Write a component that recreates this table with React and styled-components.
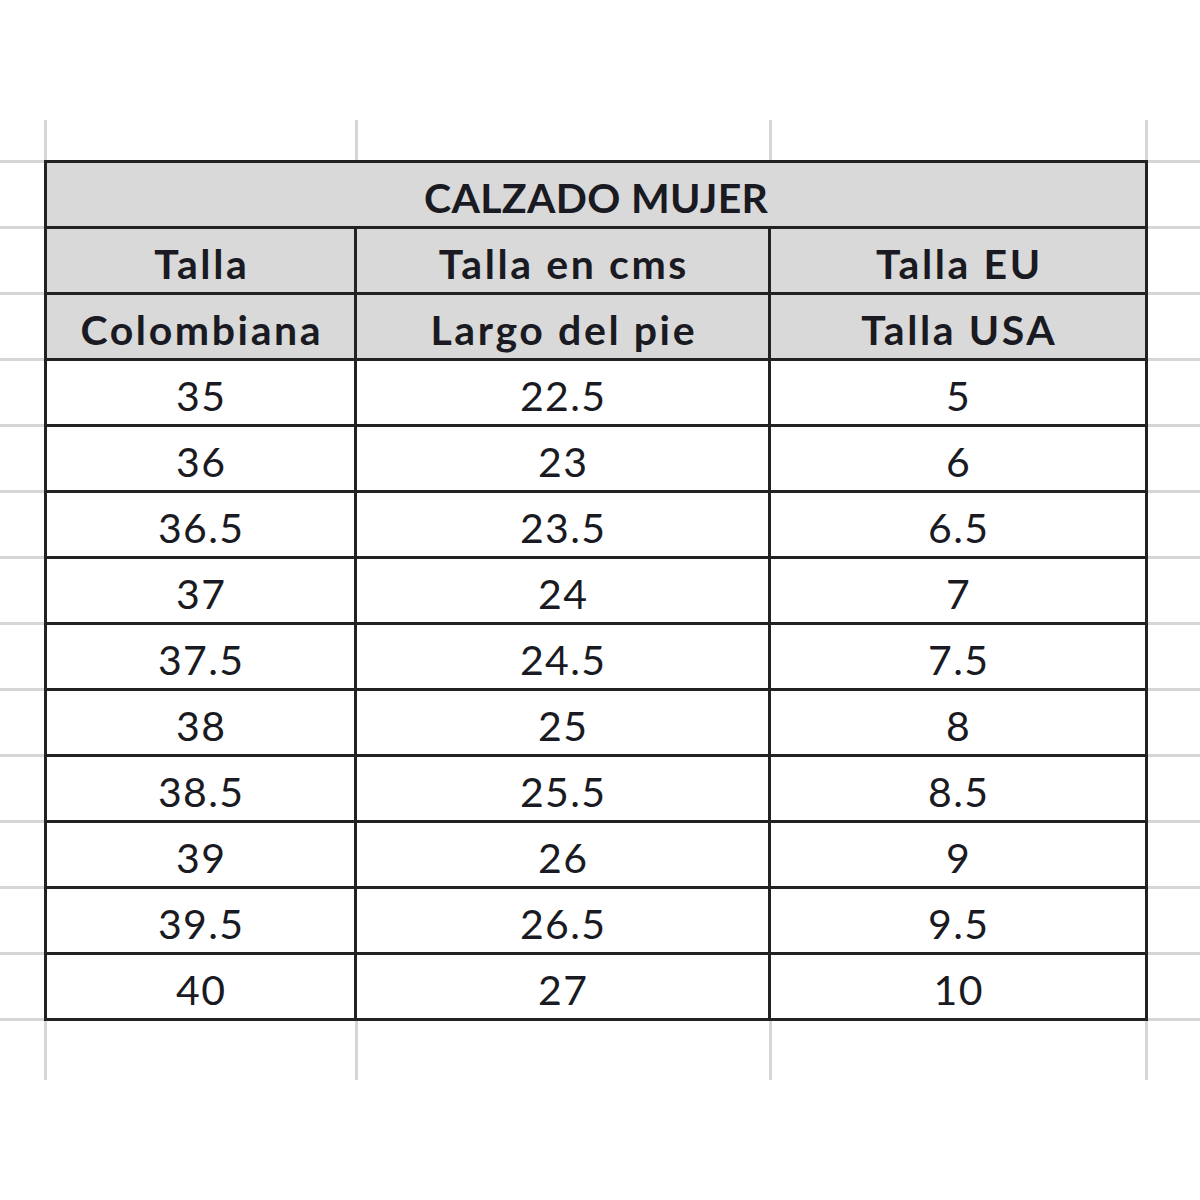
import React from "react";
import styled, { createGlobalStyle } from "styled-components";

const Global = createGlobalStyle`
  html, body { margin: 0; padding: 0; background: #ffffff; }
  body { font-family: Lato, "Open Sans", sans-serif; }
`;

const GRID = "#d6d6d6";
const INK = "#1a1a22";

const Sheet = styled.div`
  display: flex;
  width: 1200px;
  height: 1200px;
  background: #fff;
`;

const Gutter = styled.div`
  display: flex;
  flex-direction: column;
  width: ${(p) => p.$w}px;
  padding-top: 120px;
`;

const GutterCell = styled.div`
  box-sizing: border-box;
  height: ${(p) => p.$h}px;
  border-bottom: 3px solid ${GRID};
`;

const Middle = styled.div`
  display: flex;
  flex-direction: column;
  padding-top: 120px;
`;

const Strip = styled.div`
  display: flex;
  height: ${(p) => p.$h}px;
`;

const StripCell = styled.div`
  box-sizing: border-box;
  width: ${(p) => p.$w}px;
  border-left: 3px solid ${GRID};
  border-right: ${(p) => (p.$last ? `3px solid ${GRID}` : "none")};
`;

const Table = styled.div`
  display: grid;
  grid-template-columns: 307px 411px 374px;
  grid-auto-rows: 63px;
  gap: 3px;
  padding: 3px;
  background: #222;
  width: 1098px;
`;

const Cell = styled.div`
  display: flex;
  align-items: center;
  justify-content: center;
  padding-top: 5px;
  padding-left: ${(p) => p.$ls}px;
  box-sizing: border-box;
  background: ${(p) => (p.$head ? "#d9d9d9" : "#ffffff")};
  color: ${INK};
  font-family: Lato, "Open Sans", sans-serif;
  font-size: 41px;
  letter-spacing: ${(p) => p.$ls}px;
  font-weight: ${(p) => (p.$head ? 700 : 400)};
  white-space: nowrap;
`;

const Title = styled(Cell)`
  grid-column: 1 / 4;
`;

const rows = [
  ["35", "22.5", "5"],
  ["36", "23", "6"],
  ["36.5", "23.5", "6.5"],
  ["37", "24", "7"],
  ["37.5", "24.5", "7.5"],
  ["38", "25", "8"],
  ["38.5", "25.5", "8.5"],
  ["39", "26", "9"],
  ["39.5", "26.5", "9.5"],
  ["40", "27", "10"],
];

const gutterHeights = [43, ...Array(13).fill(66)];

function SideGutter({ w }) {
  return (
    <Gutter $w={w}>
      {gutterHeights.map((h, i) => (
        <GutterCell key={i} $h={h} />
      ))}
    </Gutter>
  );
}

function GridStrip({ h }) {
  return (
    <Strip $h={h}>
      <StripCell $w={311} />
      <StripCell $w={414} />
      <StripCell $w={379} $last />
    </Strip>
  );
}

const heads = ["Talla", "Talla en cms", "Talla EU", "Colombiana", "Largo del pie", "Talla USA"];

export default function App() {
  return (
    <>
      <Global />
      <Sheet>
        <SideGutter w={44} />
        <Middle>
          <GridStrip h={40} />
          <Table>
            <Title $head $ls={0.3}>CALZADO MUJER</Title>
            {heads.map((h) => (
              <Cell key={h} $head $ls={2.6}>
                {h}
              </Cell>
            ))}
            {rows.map((r) =>
              r.map((v, j) => (
                <Cell key={r[0] + "-" + j} $ls={1.3}>
                  {v}
                </Cell>
              ))
            )}
          </Table>
          <GridStrip h={59} />
        </Middle>
        <SideGutter w={52} />
      </Sheet>
    </>
  );
}
